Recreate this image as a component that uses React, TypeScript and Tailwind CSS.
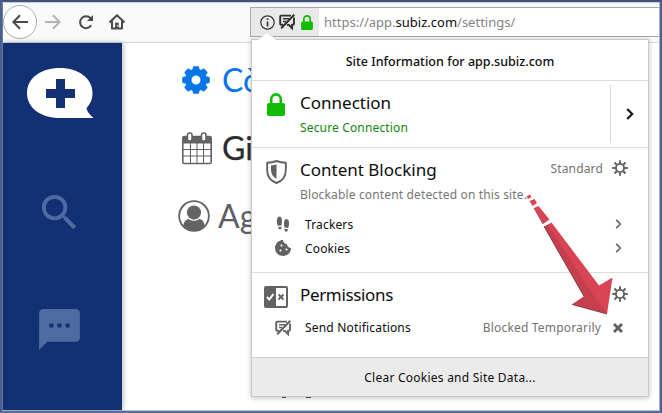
import React from "react";
import { MdSearch, MdSms } from "react-icons/md";
import { FaCookieBite } from "react-icons/fa";

const TEETH = [0, 45, 90, 135, 180, 225, 270, 315];

function Lock({ className }: { className: string }) {
  return (
    <svg className={className} viewBox="0 0 18 23" fill="none">
      <path d="M4.2 11V6.2a4.8 4.8 0 0 1 9.6 0V11" stroke="#12bc00" strokeWidth="2.6" />
      <rect x="0" y="10" width="18" height="13" rx="2" fill="#12bc00" />
    </svg>
  );
}

function SolidGear() {
  return (
    <svg className="ml-[3px] h-7 w-7 shrink-0" viewBox="-14 -14 28 28" fill="#0676e8">
      <circle r="7.7" fill="none" stroke="#0676e8" strokeWidth="6.4" />
      {TEETH.map((a) => (
        <path key={a} d="M-4 -9L-2.8 -13.8H2.8L4 -9Z" transform={`rotate(${a})`} />
      ))}
    </svg>
  );
}

function OutlineGear() {
  return (
    <svg className="h-4 w-4 shrink-0" viewBox="-8 -8 16 16" fill="none" stroke="#5f5f5f" strokeWidth="1.9">
      <circle r="4.1" />
      {TEETH.map((a) => (
        <path key={a} d="M0 -4.6V-7.8" transform={`rotate(${a})`} />
      ))}
    </svg>
  );
}

function BlockedChat({ color, className }: { color: string; className: string }) {
  return (
    <svg className={className} viewBox="0 0 16 16" fill="none" stroke={color}>
      <path d="M12 1.6H2.2a1 1 0 0 0-1 1v7.200a1 1 0 0 0 1 1h1.800M15 3.500v6.300a1 1 0 0 1-1 1h-.9v3.400l-3.200-3.300H8" strokeWidth="1.9" />
      <path d="M4 4.800h6M4 7.500h3" strokeWidth="1.5" />
      <path d="M15.2 .8L2.2 14.2" strokeWidth="2" />
    </svg>
  );
}

function Chevron({ color, width, className }: { color: string; width: number; className: string }) {
  return (
    <svg className={className} viewBox="0 0 8 12" fill="none" stroke={color} strokeWidth={width}>
      <path d="M1.2 1L6.2 6L1.2 11" />
    </svg>
  );
}

function Toolbar() {
  return (
    <div className="flex h-[40px] shrink-0 border-b border-[#d9d9db] bg-[#f9f9fa]">
      <div className="flex w-[247px] items-center pb-px">
        <div className="flex h-[34px] w-[34px] shrink-0 items-center justify-center rounded-full border border-[#adadae] bg-white">
          <svg className="h-4 w-4" viewBox="0 0 16 16" fill="none" stroke="#4a4a4c" strokeWidth="2">
            <path d="M16 8H1.5M8 1.2L1.3 8L8 14.8" />
          </svg>
        </div>
        <svg className="ml-2 h-4 w-4" viewBox="0 0 16 16" fill="none" stroke="#b5b5b7" strokeWidth="2">
          <path d="M0 8h14.5M8 1.2L14.7 8L8 14.8" />
        </svg>
        <svg className="ml-[17px] h-4 w-4" viewBox="0 0 16 16" fill="none" stroke="#4a4a4c" strokeWidth="2">
          <path d="M13.2 11.3A6 6 0 1 1 12.6 4.2" />
          <path d="M15 1v6H9z" fill="#4a4a4c" stroke="none" />
        </svg>
        <svg className="ml-[15px] h-4 w-4" viewBox="0 0 16 16" fill="none" stroke="#4a4a4c" strokeWidth="2">
          <path d="M.5 8.5L8 1.3l7.500 7.200M3 7v7.500h10V7" strokeLinejoin="round" />
          <path d="M7.900 15V8.700" strokeWidth="3.600" />
          <path d="M8.400 11v1.500" stroke="#fff" strokeWidth="1" />
        </svg>
      </div>
      <div className="mt-[4px] flex h-[30px] flex-1 border border-r-0 border-[#a8a8aa] bg-white">
        <div className="flex w-[68px] shrink-0 items-center bg-[#e9e9e9] pl-[9px]">
          <svg className="h-[15px] w-[15px]" viewBox="0 0 15 15" fill="none" stroke="#333">
            <circle cx="7.500" cy="7.500" r="6.700" strokeWidth="1.200" />
            <path d="M7.500 6.500v5M7.500 3.400v1.700" strokeWidth="1.700" />
          </svg>
          <BlockedChat color="#2f2f2f" className="ml-1 h-4 w-4" />
          <Lock className="ml-[6px] h-[15px] w-3" />
        </div>
        <div className="flex items-center pt-[2px] pl-[5px] text-[13px] text-[#858585]">
          https://app.<span className="text-[#0c0c0d]">subiz.com</span>/settings/
        </div>
      </div>
    </div>
  );
}

function Sidebar() {
  return (
    <div className="z-10 flex w-[119px] shrink-0 flex-col items-center bg-[#123073] pr-[6px] shadow-[1px_0_5px_rgba(0,0,0,0.3)]">
      <svg className="mt-[24px] h-[53px] w-[68px] shrink-0" viewBox="0 0 68 53">
        <path d="M34 1C52 1 66.500 11 66.500 26C66.500 33 64 37 60.500 41C61 44 63 47 67.500 51H34C15 51 1 41 1 26C1 11 15 1 34 1Z" fill="#fff" />
        <path d="M34.500 12v29M20 26.500h29" stroke="#123073" strokeWidth="9" />
      </svg>
      <MdSearch className="mt-[69px] h-[47px] w-[47px] shrink-0 text-[#506aa2]" />
      <MdSms className="mt-[69px] h-[49px] w-[49px] shrink-0 text-[#506aa2]" />
    </div>
  );
}

function PageContent() {
  return (
    <div className="flex flex-1 flex-col overflow-hidden bg-white pl-[57px] font-['Lato',sans-serif] text-[32px]">
      <div className="mt-[14px] flex h-[46px] items-center text-[#0676e8]">
        <SolidGear />
        <span className="ml-[12px] pb-[1px]">Cò</span>
      </div>
      <div className="mt-[22px] flex h-[46px] items-center text-[#2e2e30]">
        <svg className="ml-[3px] h-[33px] w-[30px] shrink-0" viewBox="0 0 30 33" fill="none" stroke="#636363">
          <rect x=".8" y="4.500" width="28.400" height="27" rx="1.500" strokeWidth="1.600" />
          <path d="M1 4.500h28v7H1z" fill="#636363" stroke="none" />
          <path d="M8.500 11v20M15 11v20M21.500 11v20M1 17.500h28M1 24h28" strokeWidth="1" />
          <rect x="5.500" y="1" width="4.500" height="8" rx="2" fill="#fff" strokeWidth="1.500" />
          <rect x="19.500" y="1" width="4.500" height="8" rx="2" fill="#fff" strokeWidth="1.500" />
        </svg>
        <span className="ml-[10px] pb-[1px] [-webkit-text-stroke:0.25px_#2e2e30]">Gi</span>
      </div>
      <div className="mt-[22px] flex h-[46px] items-center text-[#5c5f66]">
        <svg className="ml-[-1px] h-[32px] w-[32px] shrink-0" viewBox="0 0 33 33">
          <circle cx="16.500" cy="16.500" r="15.300" fill="none" stroke="#636363" strokeWidth="1.900" />
          <circle cx="16.500" cy="13" r="7.300" fill="#636363" />
          <path d="M5.500 27C6 22 8 20 11 19.500C14 22 19 22 22 19.500C25 20 27 22 27.500 27C24.500 30.500 21 31.800 16.500 31.800S8.500 30.500 5.500 27Z" fill="#636363" />
        </svg>
        <span className="ml-[8px] pb-[1px]">Ag</span>
      </div>
      <div className="mt-[157px] ml-[103px] flex h-[2px] shrink-0 gap-[20px]">
        <span className="w-[4px] bg-[#55555a]" />
        <span className="w-[5px] bg-[#55555a]" />
      </div>
    </div>
  );
}

function SitePanel() {
  return (
    <div className="absolute top-[39px] left-[251px] z-20 flex h-[358px] w-[398px] flex-col border border-[#c9c9ca] bg-white text-[12px] tracking-[0.15px] text-[#0c0c0d] shadow-[0_1px_5px_rgba(0,0,0,0.25)]">
      <svg className="absolute top-[-9px] left-[5px] h-[10px] w-[20px]" viewBox="0 0 20 10">
        <path d="M0 9.500L10 .7L20 9.500V10H0Z" fill="#fff" />
        <path d="M1 9L10 .7L19 9" fill="none" stroke="#d0d0d0" strokeWidth=".8" />
      </svg>
      <div className="flex h-[41px] items-center justify-center border-b border-[#dcdcdc] pt-[5px] text-[12.500px] font-medium tracking-[0.03px]">
        Site Information for app.subiz.com
      </div>
      <div className="flex h-[67px] border-b border-[#dcdcdc]">
        <Lock className="mt-[12px] ml-[15px] h-[23px] w-[18px] shrink-0" />
        <div className="ml-[15px] flex-1 pt-[10px]">
          <div className="text-[17px] leading-6 tracking-normal">Connection</div>
          <div className="mt-[5px] leading-4 text-[#12870f]">Secure Connection</div>
        </div>
        <div className="my-[4px] flex w-[38px] items-center justify-center border-l border-[#d9d9d9]">
          <Chevron color="#18181a" width={2.2} className="h-[12px] w-2" />
        </div>
      </div>
      <div className="h-[125px] border-b border-[#dcdcdc] pl-[14px]">
        <div className="flex h-[58px]">
          <svg className="mt-[12px] h-6 w-[21px] shrink-0" viewBox="0 0 21 24">
            <path d="M1.200 2.800Q6 2.500 10.500 1Q15 2.500 19.800 2.800V10C19.800 17 16 21 10.500 23C5 21 1.200 17 1.200 10Z" fill="none" stroke="#636363" strokeWidth="1.900" />
            <path d="M5 5.500L10.500 4.500V19C7 17 5 14 5 10Z" fill="#636363" />
          </svg>
          <div className="ml-[13px] flex-1 pt-[10px]">
            <div className="text-[17px] leading-6 tracking-normal">Content Blocking</div>
            <div className="mt-[5px] leading-4 text-[#767676]">Blockable content detected on this site.</div>
          </div>
          <div className="mt-[12px] flex h-4 items-center gap-[9px] pr-[20px] text-[#737373]">
            <span className="pt-px">Standard</span>
            <OutlineGear />
          </div>
        </div>
        <div className="mt-[6px] flex h-6 items-center pr-[26px] pl-[9px]">
          <svg className="h-[17px] w-4" viewBox="0 0 16 17" fill="#636363">
            <path d="M4.500 .5C7 .5 7.500 4 6.500 9.500L2.800 9.800C1 5 2 .5 4.500 .5ZM3 11L6.500 10.700C7 14 3.500 14.500 3 11ZM11.500 3C14 3 15 7 13.200 12L9.500 11.500C8.500 7 9 3 11.500 3ZM9.500 12.800L13 13.200C12.500 17 9 16.500 9.500 12.800Z" />
          </svg>
          <span className="ml-[14px] flex-1 pt-[2px]">Trackers</span>
          <Chevron color="#636363" width={1.9} className="h-[10px] w-[7px]" />
        </div>
        <div className="flex h-6 items-center pr-[26px] pl-[9px]">
          <FaCookieBite className="h-4 w-4 text-[#636363]" />
          <span className="ml-[14px] flex-1 pt-[2px]">Cookies</span>
          <Chevron color="#636363" width={1.9} className="h-[10px] w-[7px]" />
        </div>
      </div>
      <div className="h-[84px] pl-[12px]">
        <div className="flex h-[42px] items-center pr-[20px]">
          <svg className="mt-[6px] h-[22px] w-6 shrink-0" viewBox="0 0 24 22">
            <rect width="24" height="22" rx="2" fill="#636363" />
            <path d="M12 2h10v18H12z" fill="#fff" />
            <path d="M3 11l2.300 2.500L9.500 8" fill="none" stroke="#fff" strokeWidth="2" />
            <path d="M14.500 8.500l5 5M19.500 8.500l-5 5" stroke="#636363" strokeWidth="1.800" />
          </svg>
          <span className="mt-[2px] ml-[12px] flex-1 text-[17px] tracking-[-0.35px]">Permissions</span>
          <OutlineGear />
        </div>
        <div className="mt-[1px] flex h-6 items-center pr-[25px] pl-[11px]">
          <BlockedChat color="#636363" className="h-4 w-4" />
          <span className="ml-[14px] flex-1 tracking-[0.18px]">Send Notifications</span>
          <span className="tracking-[0.18px] text-[#737373]">Blocked Temporarily</span>
          <svg className="ml-[12px] h-[10px] w-[10px]" viewBox="0 0 10 10" stroke="#5f5f5f" strokeWidth="2.800">
            <path d="M1 1l8 8M9 1L1 9" />
          </svg>
        </div>
      </div>
      <div className="flex flex-1 items-center justify-center border-t border-[#cfcfcf] bg-[#ebebeb] pt-[2px] tracking-[0.24px]">
        Clear Cookies and Site Data...
      </div>
    </div>
  );
}

function PointerArrow() {
  return (
    <svg className="absolute top-[190px] left-[520px] z-30 h-[130px] w-[100px]" viewBox="520 190 100 130">
      <g fill="#d94455">
        <path d="M526.500 196.500L530 194.500L531.500 197L528 199Z" />
        <path d="M529.500 201L534.500 199L537 203L532.500 206Z" />
        <path d="M534 208L538.500 206L549.500 219.500L543 224Z" />
        <path d="M544 226.500L551.500 222.500L599 285.500L612.500 277.500L607 314L572 304.500L584 296.500Z" />
      </g>
      <path d="M544 226.500L548 225L594 296L607 314L572 304.500L584 296.500Z" fill="#c63f4e" />
      <path d="M534 208L543 224M544 226.500L584 296.500M572 304.500L607 314" fill="none" stroke="#6b3a40" strokeWidth=".7" />
    </svg>
  );
}

export default function App() {
  return (
    <div className="relative h-[413px] w-[662px] overflow-hidden border-2 border-t-[#43527d] border-r-[#4b5f90] border-b-[#5a6d9b] border-l-[#4b5f92] font-['Noto_Sans','Open_Sans',sans-serif]">
      <div className="flex h-full flex-col border border-t-[#c9cedb] border-r-[#a9b4cd] border-b-[#b9c2d6] border-l-[#6d7da6] bg-white">
        <Toolbar />
        <div className="flex min-h-0 flex-1">
          <Sidebar />
          <PageContent />
        </div>
      </div>
      <div className="absolute -top-[2px] -left-[2px] h-0 w-0">
        <SitePanel />
        <PointerArrow />
      </div>
    </div>
  );
}
